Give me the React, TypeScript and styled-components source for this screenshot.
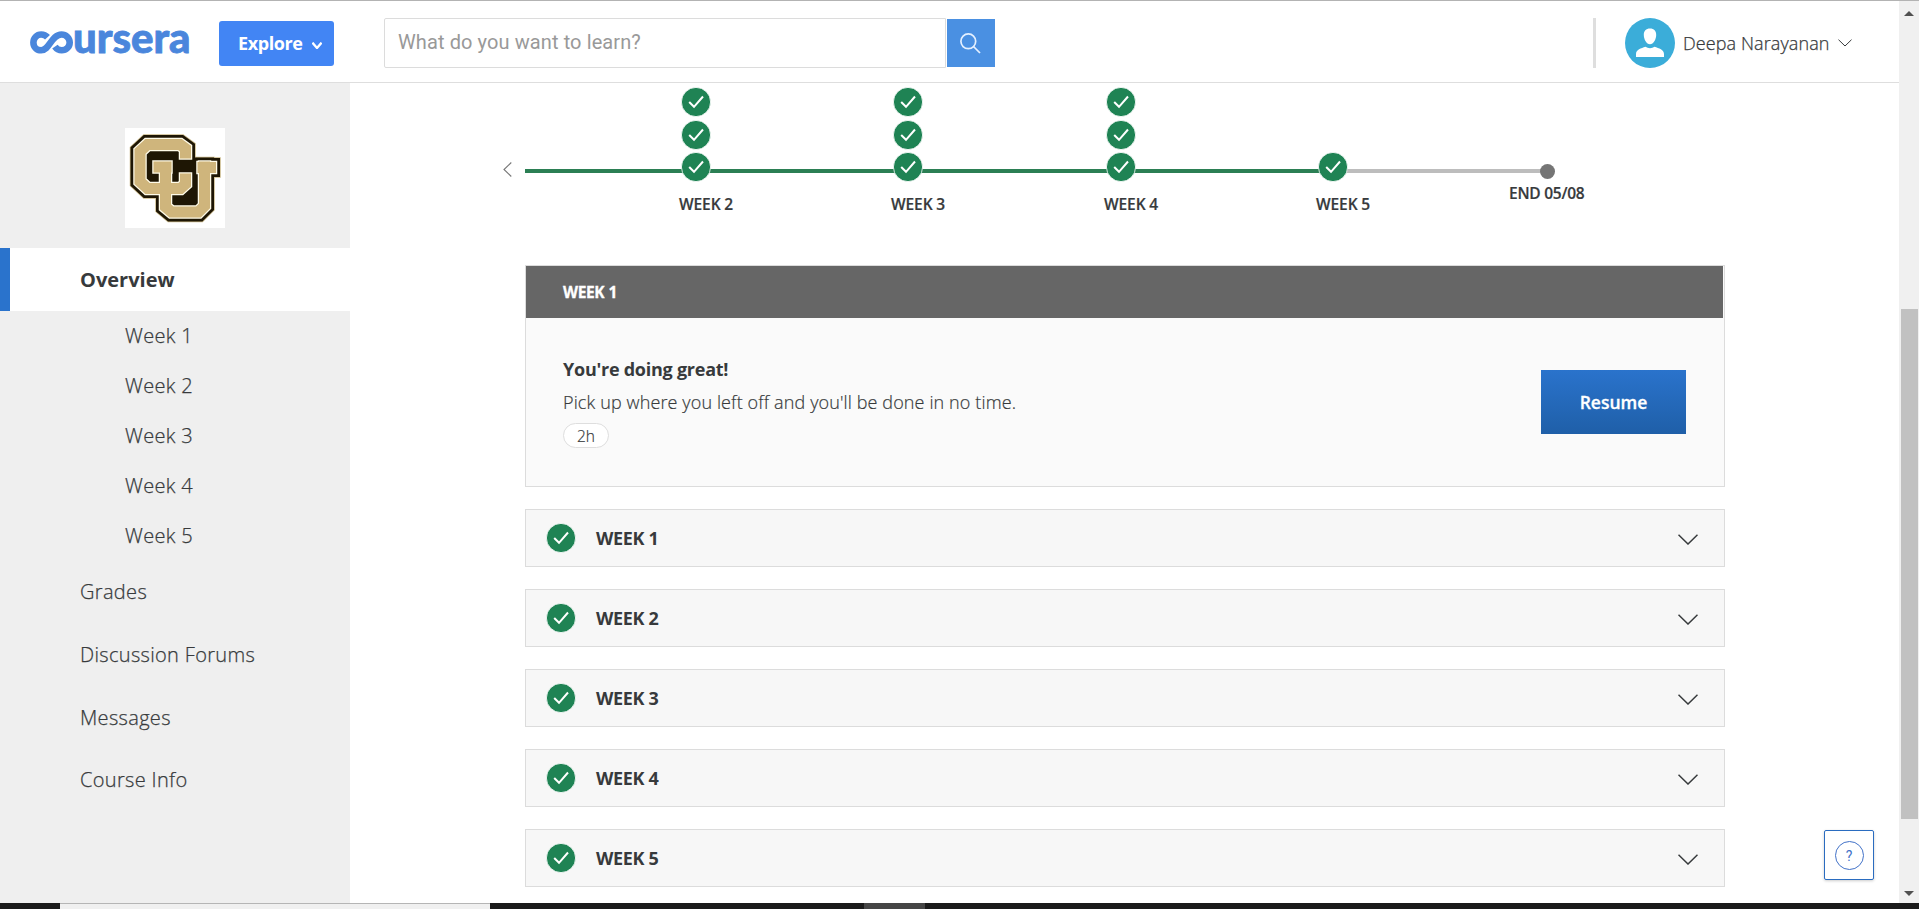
import React from 'react';
import styled, { createGlobalStyle } from 'styled-components';

const GlobalStyle = createGlobalStyle`
  *, *::before, *::after { box-sizing: border-box; }
  html, body { margin: 0; padding: 0; overflow: hidden; }
  body {
    background: #fff;
    color: #373a3c;
    font-family: 'Open Sans', 'Noto Sans', sans-serif;
  }
  button { font-family: inherit; cursor: pointer; }
  svg { display: block; flex: none; }
`;

const Screen = styled.div`
  width: 100vw;
  height: 909px;
  display: flex;
  flex-direction: column;
  border-top: 1px solid #b3b3b3;
`;

const Viewport = styled.div`
  flex: 1;
  min-height: 0;
  display: flex;
`;

const Page = styled.div`
  flex: 1;
  min-width: 0;
  display: flex;
  flex-direction: column;
`;

/* Header */

const Header = styled.header`
  height: 82px;
  flex: none;
  display: flex;
  align-items: flex-start;
  padding: 7px 47px 0 30px;
  border-bottom: 1px solid #dedede;
`;

const LogoLink = styled.a`
  width: 189px;
`;

const ExploreButton = styled.button`
  width: 115px;
  height: 45px;
  margin-top: 13px;
  padding: 0 0 0 19px;
  display: flex;
  align-items: center;
  gap: 9px;
  border: 0;
  border-radius: 3px;
  background: #4285f4;
  color: #fff;
  font-size: 18px;
  line-height: 45px;
  font-weight: 700;
  letter-spacing: -0.4px;
`;

const ExploreArrow = styled.span`
  padding-top: 3px;
`;

const SearchForm = styled.form`
  display: flex;
  align-items: center;
  margin: 10px 0 0 50px;
`;

const SearchInput = styled.input`
  width: 562px;
  height: 50px;
  padding: 0 13px 2px;
  border: 1px solid #dcdcdc;
  border-radius: 2px 0 0 2px;
  font-family: Roboto, sans-serif;
  font-size: 20px;
  letter-spacing: 0.1px;
  color: #373a3c;
  outline: none;
  &::placeholder { color: #999; opacity: 1; }
`;

const SearchButton = styled.button`
  width: 48px;
  height: 48px;
  margin-left: 1px;
  padding: 0 0 0 13px;
  border: 0;
  background: #4a90e2;
`;

const UserMenu = styled.div`
  height: 50px;
  margin: 10px 0 0 auto;
  padding-left: 29px;
  display: flex;
  align-items: center;
  border-left: 3px solid #dedede;
`;

const UserName = styled.span`
  width: 155px;
  margin-left: 8px;
  font-size: 18px;
  font-weight: 300;
  letter-spacing: 0.1px;
  -webkit-text-stroke: 0.25px currentColor;
  white-space: nowrap;
`;

/* Side navigation */

const Body = styled.div`
  flex: 1;
  min-height: 0;
  display: flex;
`;

const Sidebar = styled.nav`
  width: 350px;
  flex: none;
  display: flex;
  flex-direction: column;
  background: #efefef;
`;

const Emblem = styled.div`
  width: 100px;
  height: 100px;
  margin: 45px auto 20px;
  background: #fff;
`;

const NavItem = styled.a<{ $active?: boolean }>`
  height: 62.6px;
  display: flex;
  align-items: center;
  padding-left: ${p => (p.$active ? 70 : 80)}px;
  border-left: ${p => (p.$active ? '10px solid #2a73cc' : '0')};
  background: ${p => (p.$active ? '#fff' : 'transparent')};
  font-size: 20px;
  font-weight: ${p => (p.$active ? 700 : 300)};
  letter-spacing: ${p => (p.$active ? 0 : 0.33)}px;
  -webkit-text-stroke: ${p => (p.$active ? 0 : 0.25)}px currentColor;
`;

const NavSubItem = styled(NavItem)`
  height: 50px;
  padding-left: 125px;
`;

/* Main column */

const Main = styled.main`
  position: relative;
  flex: 1;
  min-width: 0;
  padding: 0 174px 0 152px;
`;

const Timeline = styled.section`
  height: 182px;
  display: flex;
  align-items: flex-start;
`;

const BackButton = styled.button`
  width: 23px;
  margin-top: 79px;
  padding: 0 0 0 1px;
  border: 0;
  background: none;
`;

const Track = styled.div`
  position: relative;
  width: 1200px;
  height: 182px;
`;

const TrackLine = styled.div<{ $done?: boolean }>`
  position: absolute;
  top: 86px;
  left: ${p => (p.$done ? 0 : 808)}px;
  width: ${p => (p.$done ? 808 : 214)}px;
  height: 4px;
  background: ${p => (p.$done ? '#2b7f54' : '#bdbdbd')};
`;

const Milestone = styled.div<{ $x: number }>`
  position: absolute;
  left: ${p => p.$x}px;
  bottom: 49px;
  display: flex;
  flex-direction: column;
  align-items: flex-start;
`;

const Bubble = styled.span<{ $gap: number }>`
  width: 30px;
  height: 30px;
  margin-bottom: ${p => p.$gap}px;
`;

const MilestoneLabel = styled.span`
  margin: 10px 0 0 -2px;
  height: 24px;
  font-size: 15.5px;
  line-height: 24px;
  font-weight: 600;
  letter-spacing: -0.1px;
  -webkit-text-stroke: 0.2px currentColor;
  white-space: nowrap;
`;

const EndPoint = styled.div`
  position: absolute;
  top: 81px;
  left: 984px;
  display: flex;
  flex-direction: column;
  align-items: center;
  font-size: 15.5px;
  line-height: 24px;
  font-weight: 600;
  letter-spacing: -0.25px;
  -webkit-text-stroke: 0.2px currentColor;
  white-space: nowrap;
`;

const EndDot = styled.span`
  width: 15px;
  height: 15px;
  margin: 0 0 2px 1px;
  border-radius: 50%;
  background: #757575;
`;

const Cards = styled.div`
  width: 1200px;
  margin-left: 23px;
  display: flex;
  flex-direction: column;
  gap: 22px;
`;

const CurrentCard = styled.section`
  height: 222px;
  border: 1px solid #dcdcdc;
  background: #fafafa;
`;

const CurrentHeader = styled.h2`
  height: 52px;
  margin: 0 1px 0 0;
  padding-left: 37px;
  background: #666;
  color: #fff;
  font-size: 15.5px;
  font-weight: 700;
  line-height: 53px;
  letter-spacing: -0.35px;
  word-spacing: 0.5px;
  -webkit-text-stroke: 0.3px currentColor;
`;

const CurrentBody = styled.div`
  display: flex;
  justify-content: space-between;
  padding: 35px 38px 0 37px;
`;

const Message = styled.div`
  display: flex;
  flex-direction: column;
  align-items: flex-start;
  font-size: 18px;
  line-height: 33px;
`;

const MessageTitle = styled.strong`
  font-weight: 700;
  letter-spacing: -0.25px;
`;

const MessageText = styled.span`
  font-weight: 300;
  letter-spacing: 0.12px;
  -webkit-text-stroke: 0.2px currentColor;
`;

const TimePill = styled.span`
  height: 25px;
  margin-top: 4px;
  padding: 0 13px;
  border: 1px solid #dedede;
  border-radius: 13px;
  background: #fff;
  font-size: 15.5px;
  line-height: 24px;
  font-weight: 300;
  -webkit-text-stroke: 0.2px currentColor;
`;

const ResumeButton = styled.button`
  width: 145px;
  height: 64px;
  margin-top: 17px;
  border: 0;
  background: linear-gradient(#2a73cc, #1f5fa8);
  color: #fff;
  font-size: 17.5px;
  font-weight: 600;
  -webkit-text-stroke: 0.3px currentColor;
`;

const WeekRow = styled.button`
  height: 58px;
  padding: 0 26px 0 20px;
  display: flex;
  align-items: center;
  border: 1px solid #dcdcdc;
  background: #f7f7f7;
  color: #373a3c;
  font-size: 18px;
  font-weight: 700;
`;

const WeekName = styled.span`
  flex: 1;
  margin-left: 20px;
  text-align: left;
  letter-spacing: -0.35px;
`;

const RowArrow = styled.span`
  padding-top: 3px;
`;

const HelpButton = styled.button`
  position: absolute;
  right: 25px;
  bottom: 23px;
  width: 50px;
  height: 50px;
  display: flex;
  align-items: center;
  justify-content: center;
  border: 1px solid #2a6cc0;
  border-radius: 2px;
  background: #fff;
  box-shadow: 0 1px 3px rgba(0, 0, 0, 0.2);
`;

const HelpMark = styled.span`
  width: 29px;
  height: 29px;
  flex: none;
  border: 1.5px solid #4272c8;
  border-radius: 50%;
  color: #4272c8;
  font-size: 14px;
  line-height: 28px;
  text-align: center;
  font-family: Roboto, sans-serif;
`;

/* Scrollbar and taskbar */

const Scrollbar = styled.aside`
  width: 20px;
  flex: none;
  display: flex;
  flex-direction: column;
  align-items: center;
  justify-content: space-between;
  padding: 10px 0 7px;
  background: #f0f0f0;
`;

const ScrollTrack = styled.div`
  flex: 1;
  padding-top: 293px;
`;

const ScrollThumb = styled.div`
  width: 17px;
  height: 510px;
  background: #c1c1c1;
`;

const Taskbar = styled.footer`
  height: 6px;
  flex: none;
  display: flex;
  background: #1a1a1a;
`;

const TaskSearch = styled.div`
  width: 430px;
  margin-left: 60px;
  background: #f0f0f0;
  border-top: 1px solid #b5b5b5;
`;

const TaskApp = styled.div`
  width: 61px;
  margin-left: 374px;
  background: #454545;
`;

const Logo = () => (
  <svg width="168" height="72" viewBox="0 -23 168 72" role="img" aria-label="coursera">
    <path
      d="M17.500 6.200C15.800 4.300 13.600 3.500 11.200 3.500C6.600 3.500 3.400 7.200 3.400 11.500C3.400 16 6.800 19.300 11.200 19.300C19.500 19.300 21.500 3.500 31.500 3.500C36 3.500 39.700 7 39.700 11.400C39.700 15.800 36.200 19.300 31.700 19.300C28.800 19.300 26.600 18 24.900 15.600"
      fill="none"
      stroke="#4a86dc"
      strokeWidth="6.6"
    />
    <text
      x="43"
      y="21.7"
      textLength="117.5"
      lengthAdjust="spacingAndGlyphs"
      fill="#4a86dc"
      stroke="#4a86dc"
      strokeWidth="0.8"
      fontFamily="Lato, sans-serif"
      fontWeight="900"
      fontSize="41"
    >
      ursera
    </text>
  </svg>
);

const cuLoop = 'M60.5 25V20.5L55 16.5H22.5L15 23.5V53.5L22.5 60.5H55.5L60.5 56V51';
const cuCup = 'M34 39H41M40.5 39V79L46.5 84H73.5L79.5 78V39M78 39.5H85.5';

const University = () => (
  <svg width="100" height="100" viewBox="0 0 100 100" fill="none" strokeLinecap="square">
    <g stroke="#c9b888" strokeWidth="20.5"><path d={cuLoop} /><path d={cuCup} /></g>
    <g stroke="#1e1604" strokeWidth="19"><path d={cuLoop} /><path d={cuCup} /></g>
    <path d="M20 22H54V32H74V79H46V56H20Z" fill="#1e1604" />
    <g stroke="#fffbe8" strokeWidth="13.5"><path d={cuLoop} /><path d={cuCup} /></g>
    <g stroke="#cfb57c" strokeWidth="11"><path d={cuLoop} /><path d={cuCup} /></g>
  </svg>
);

const Check = () => (
  <svg width="30" height="30" viewBox="0 0 30 30">
    <circle cx="15" cy="15" r="14.6" fill="#1f8354" stroke="#fff" strokeWidth="0.8" />
    <path d="M8.2 15L13 19.8L22 9.5" fill="none" stroke="#fff" strokeWidth="2" />
  </svg>
);

const Chevron = ({ width, height, stroke = 1.5 }: { width: number; height: number; stroke?: number }) => (
  <svg width={width} height={height} viewBox={`0 0 ${width} ${height}`}>
    <path
      d={`M.5 .7L${width / 2} ${height - 1}L${width - 0.5} .7`}
      fill="none"
      stroke="currentColor"
      strokeWidth={stroke}
    />
  </svg>
);

const milestones = [
  { label: 'WEEK 2', x: 156, checks: 3 },
  { label: 'WEEK 3', x: 368, checks: 3 },
  { label: 'WEEK 4', x: 581, checks: 3 },
  { label: 'WEEK 5', x: 793, checks: 1 },
];

const weeks = [1, 2, 3, 4, 5];

export default function App() {
  return (
    <Screen>
      <GlobalStyle />
      <Viewport>
        <Page>
          <Header>
            <LogoLink><Logo /></LogoLink>
            <ExploreButton type="button">
              Explore
              <ExploreArrow><Chevron width={10} height={7} stroke={2.3} /></ExploreArrow>
            </ExploreButton>
            <SearchForm>
              <SearchInput placeholder="What do you want to learn?" />
              <SearchButton type="button" aria-label="Search">
                <svg width="21" height="21" viewBox="0 0 21 21" fill="none" stroke="#e4f0ff" strokeWidth="1.7">
                  <circle cx="8.3" cy="8.3" r="7.4" />
                  <path d="M13.5 13.5L20 20" />
                </svg>
              </SearchButton>
            </SearchForm>
            <UserMenu>
              <svg width="50" height="50" viewBox="0 0 50 50">
                <circle cx="25" cy="25" r="25" fill="#3badd9" />
                <path d="M25 10.5C29 10.5 31.3 13 31.2 17C31.1 21.5 28.5 26.2 25 26.2S18.9 21.5 18.8 17C18.7 13 21 10.5 25 10.5Z" fill="#fff" />
                <path d="M11 39V36C11 31.5 16 30.5 20.5 28.8C23 30.6 27 30.6 29.5 28.8C34 30.5 39 31.5 39 36V39Z" fill="#fff" />
              </svg>
              <UserName>Deepa Narayanan</UserName>
              <Chevron width={14} height={8} stroke={1} />
            </UserMenu>
          </Header>
          <Body>
            <Sidebar>
              <Emblem><University /></Emblem>
              <NavItem $active>Overview</NavItem>
              {weeks.map(n => <NavSubItem key={n}>Week {n}</NavSubItem>)}
              <NavItem>Grades</NavItem>
              <NavItem>Discussion Forums</NavItem>
              <NavItem>Messages</NavItem>
              <NavItem>Course Info</NavItem>
            </Sidebar>
            <Main>
              <Timeline>
                <BackButton type="button" aria-label="Previous weeks">
                  <svg width="9" height="15" viewBox="0 0 9 15" fill="none" stroke="#777" strokeWidth="1.1">
                    <path d="M8.3 .5L1 7.5L8.3 14.5" />
                  </svg>
                </BackButton>
                <Track>
                  <TrackLine $done />
                  <TrackLine />
                  {milestones.map(m => (
                    <Milestone key={m.label} $x={m.x}>
                      {Array.from({ length: m.checks }, (_, i) => (
                        <Bubble key={i} $gap={i === m.checks - 1 ? 0 : i === 0 ? 3 : 2}><Check /></Bubble>
                      ))}
                      <MilestoneLabel>{m.label}</MilestoneLabel>
                    </Milestone>
                  ))}
                  <EndPoint>
                    <EndDot />
                    END 05/08
                  </EndPoint>
                </Track>
              </Timeline>
              <Cards>
                <CurrentCard>
                  <CurrentHeader>WEEK 1</CurrentHeader>
                  <CurrentBody>
                    <Message>
                      <MessageTitle>You're doing great!</MessageTitle>
                      <MessageText>Pick up where you left off and you'll be done in no time.</MessageText>
                      <TimePill>2h</TimePill>
                    </Message>
                    <ResumeButton type="button">Resume</ResumeButton>
                  </CurrentBody>
                </CurrentCard>
                {weeks.map(n => (
                  <WeekRow key={n} type="button">
                    <Check />
                    <WeekName>WEEK {n}</WeekName>
                    <RowArrow><Chevron width={20} height={11} stroke={1.5} /></RowArrow>
                  </WeekRow>
                ))}
              </Cards>
              <HelpButton type="button" aria-label="Help"><HelpMark>?</HelpMark></HelpButton>
            </Main>
          </Body>
        </Page>
        <Scrollbar>
          <svg width="10" height="5" viewBox="0 0 10 5"><path d="M0 5L5 0L10 5Z" fill="#505050" /></svg>
          <ScrollTrack><ScrollThumb /></ScrollTrack>
          <svg width="10" height="5" viewBox="0 0 10 5"><path d="M0 0L5 5L10 0Z" fill="#505050" /></svg>
        </Scrollbar>
      </Viewport>
      <Taskbar>
        <TaskSearch />
        <TaskApp />
      </Taskbar>
    </Screen>
  );
}
